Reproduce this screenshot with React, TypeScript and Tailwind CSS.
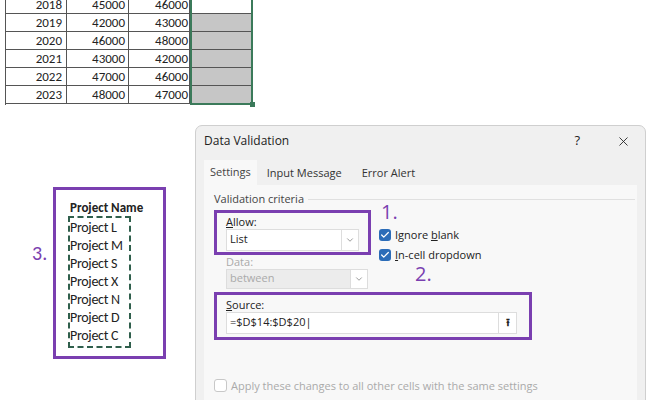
import { Check, X, ChevronDown } from "lucide-react"

const rows = [
  ["2018", "45000", "46000"],
  ["2019", "42000", "43000"],
  ["2020", "46000", "48000"],
  ["2021", "43000", "42000"],
  ["2022", "47000", "46000"],
  ["2023", "48000", "47000"],
]

const projects = ["Project L", "Project M", "Project S", "Project X", "Project N", "Project D", "Project C"]

function Box({ checked }: { checked: boolean }) {
  return checked ? (
    <span className="w-[12px] h-[12px] rounded-[3px] bg-[#2b6cb8] flex items-center justify-center">
      <Check className="w-[10px] h-[10px] text-white" strokeWidth={3} />
    </span>
  ) : (
    <span className="w-[13px] h-[13px] rounded-[3px] border border-[#c8c8c8] bg-white" />
  )
}

export default function App() {
  return (
    <div className="relative w-[650px] h-[400px] bg-white overflow-hidden text-[#222]" style={{ fontFamily: "Calibri, 'Liberation Sans', Arial, sans-serif" }}>
      {/* sheet */}
      <div className="absolute left-[5px] top-[-5px] flex">
        <div className="border-l border-t border-[#555]">
          {rows.map((r) => (
            <div key={r[0]} className="flex h-[18px] border-b border-[#555] text-[13px] leading-[17px]">
              <div className="w-[61px] border-r border-[#555] text-right pr-[4px]">{r[0]}</div>
              <div className="w-[62px] border-r border-[#555] text-right pr-[3px]">{r[1]}</div>
              <div className="w-[61px] border-r border-[#555] text-right pr-[1px]">{r[2]}</div>
            </div>
          ))}
        </div>
        <div className="relative w-[63px] border-2 border-[#3b7a5a] mt-[-1px]">
          <div className="h-[17px] bg-white" />
          {rows.slice(1).map((r) => (
            <div key={r[0]} className="h-[18px] bg-[#c6c6c6] border-t border-[#555]" />
          ))}
          <div className="absolute right-[-4px] bottom-[-4px] w-[5px] h-[5px] bg-[#3b7a5a]" />
        </div>
      </div>

      {/* project list */}
      <div className="absolute left-[32px] top-[238px] text-[20px] text-[#7a3fb0]">3.</div>
      <div className="absolute left-[53px] top-[187px] w-[113px] h-[172px] border-[3px] border-[#7a3fb0] pl-[12px] pt-[9px]">
        <div className="text-[13px] font-bold pl-[2px] leading-[17px]">Project Name</div>
        <div className="w-[63px] border-2 border-dashed border-[#2f5f4c] text-[14px] leading-[18px] py-[1px]">
          {projects.map((p) => (
            <div key={p} className="whitespace-nowrap tracking-[-0.3px]">{p}</div>
          ))}
        </div>
      </div>

      {/* dialog */}
      <div className="absolute left-[195px] top-[125px] w-[451px] h-[290px] bg-[#f0f0f0] border border-[#cfcfcf] rounded-[7px] text-[11px]" style={{ fontFamily: "'Segoe UI', 'Open Sans', 'Noto Sans', sans-serif" }}>
        <div className="flex items-center h-[30px] px-[8px] text-[12px]">
          <span>Data Validation</span>
          <span className="ml-auto mr-[36px] text-[13px]">?</span>
          <X className="w-[15px] h-[15px] mr-[6px]" strokeWidth={1.4} />
        </div>
        <div className="flex items-end h-[29px] pl-[8px] text-[#333]">
          <div className="px-[6px] h-[25px] bg-[#f8f8f8] leading-[24px] text-[#444]">Settings</div>
          <div className="px-[10px] h-[24px] leading-[24px]">Input Message</div>
          <div className="px-[10px] h-[24px] leading-[24px]">Error Alert</div>
        </div>
        <div className="mx-[8px] h-[240px] bg-[#f8f8f8] pl-[10px] pt-[6px] relative">
          <div className="flex items-center gap-[4px] text-[#444]">
            <span>Validation criteria</span>
            <div className="flex-1 border-t border-[#e0e0e0] mr-[2px]" />
          </div>
          <div className="flex items-start h-[45px] mt-[2px]">
            <div className="w-[157px] h-[45px] border-[3px] border-[#7a3fb0] px-[9px] pt-[2px]">
              <div className="leading-[14px]"><u>A</u>llow:</div>
              <div className="h-[22px] bg-white border border-[#ddd] flex items-center pl-[3px]">
                List
                <div className="ml-auto h-full w-[17px] border-l border-[#ddd] flex items-center justify-center">
                  <ChevronDown className="w-[10px] h-[10px] text-[#888]" />
                </div>
              </div>
            </div>
            <div className="ml-[8px] flex flex-col">
              <span className="text-[20px] leading-[20px] text-[#7a3fb0] mt-[-8px] ml-[2px]">1.</span>
              <div className="flex items-center gap-[4px] mt-[5px]"><Box checked /><span>Ignore <u>b</u>lank</span></div>
              <div className="flex items-center gap-[4px] mt-[4px]"><Box checked /><span><u>I</u>n-cell dropdown</span></div>
            </div>
          </div>
          <div className="pl-[12px] text-[#aaa] leading-[14px]">Data:</div>
          <div className="ml-[12px] w-[142px] h-[20px] bg-[#ececec] border border-[#ddd] flex items-center pl-[3px] text-[#aaa]">
            between
            <div className="ml-auto h-full w-[17px] border-l border-[#ddd] bg-white flex items-center justify-center">
              <ChevronDown className="w-[10px] h-[10px] text-[#888]" />
            </div>
          </div>
          <div className="absolute left-[211px] top-[79px] text-[20px] leading-[20px] text-[#7a3fb0]">2.</div>
          <div className="mt-[3px] w-[318px] h-[48px] border-[3px] border-[#7a3fb0] px-[9px] pt-[3px]">
            <div className="leading-[14px]"><u>S</u>ource:</div>
            <div className="h-[22px] w-[291px] bg-white border border-[#ddd] flex items-center pl-[3px]">
              =$D$14:$D$20|
              <div className="ml-auto h-full w-[18px] border-l border-[#ddd] flex items-center justify-center text-[11px] font-bold">⭱</div>
            </div>
          </div>
          <div className="flex items-center gap-[4px] mt-[38px] text-[#aaa]"><Box checked={false} /><span>Apply these changes to all other cells with the same settings</span></div>
        </div>
      </div>
    </div>
  )
}
